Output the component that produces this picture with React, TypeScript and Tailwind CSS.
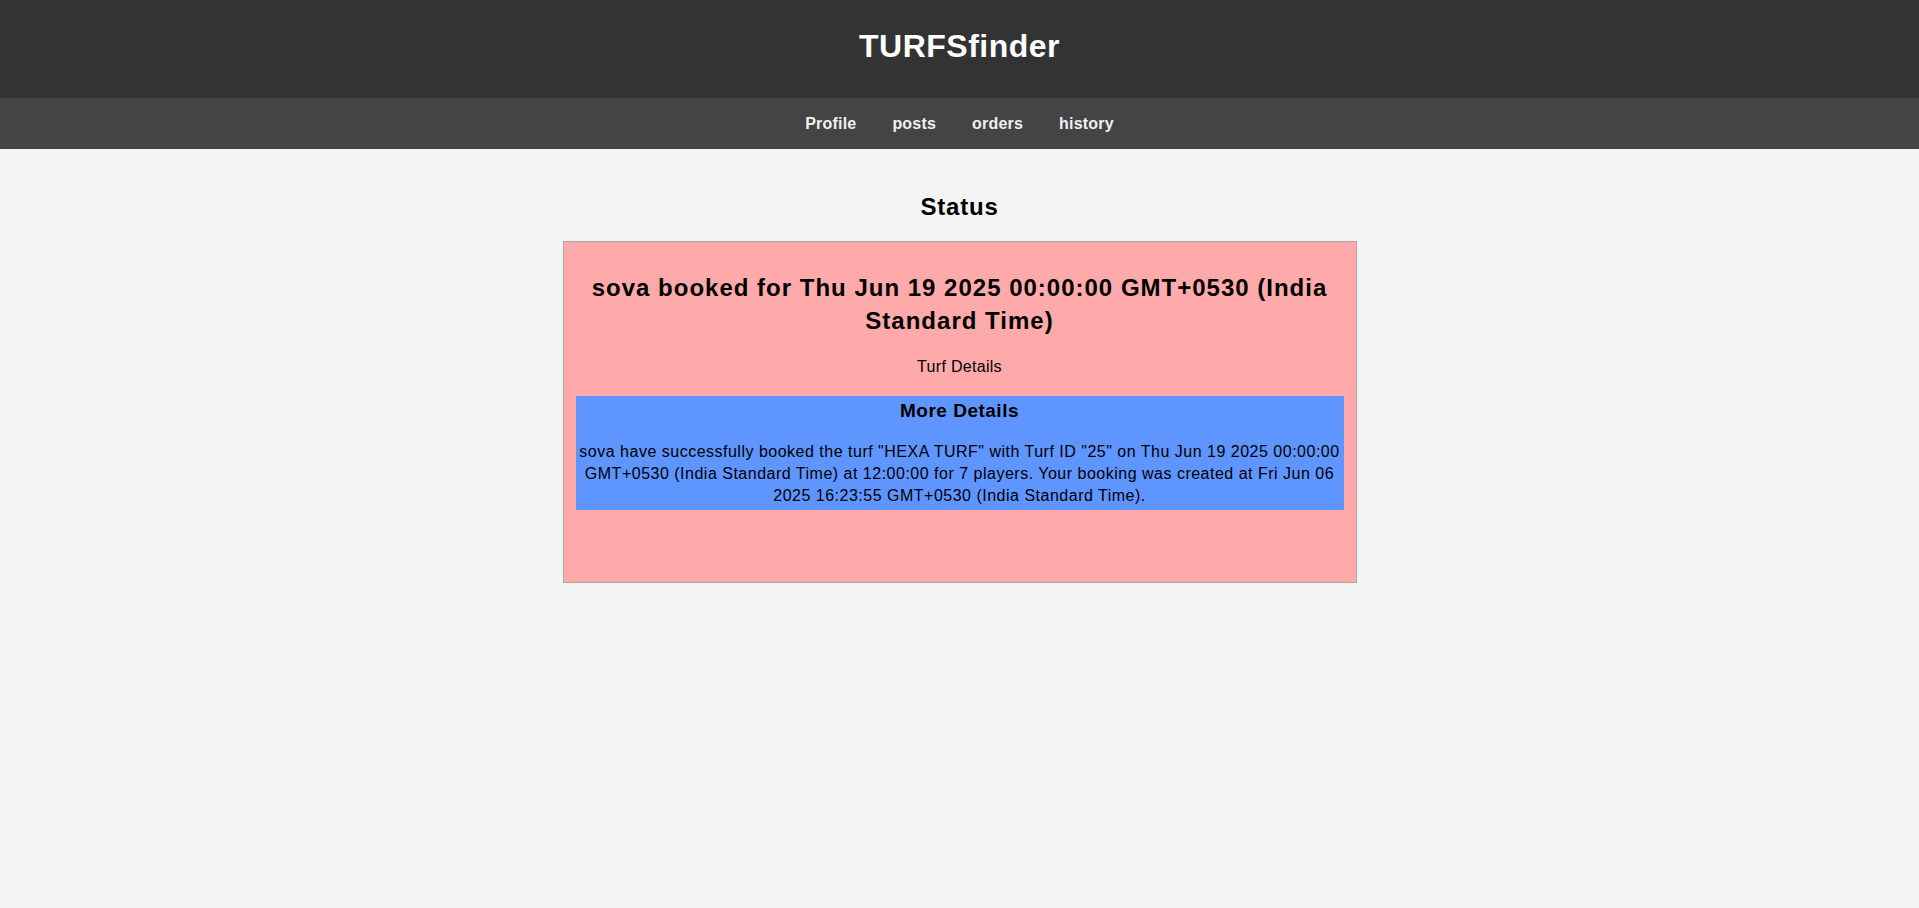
export default function App() {
  const font = { fontFamily: '"Comic Sans MS", "Liberation Sans", Arial, sans-serif' };
  return (
    <div className="min-h-[908px] bg-[#f4f4f4] text-black" style={font}>
      <header className="h-[98px] bg-[#333333] flex items-center justify-center">
        <h1 className="text-white text-[32px] font-bold leading-none tracking-[0.5px] -mt-[6px]">TURFSfinder</h1>
      </header>
      <nav className="h-[51px] bg-[#444444] flex items-center justify-center">
        {['Profile', 'posts', 'orders', 'history'].map((t) => (
          <a key={t} href="#" className="px-[18px] text-[#f0f0f0] text-[16px] font-bold leading-[22px] tracking-[0.2px]">
            {t}
          </a>
        ))}
      </nav>
      <main className="flex flex-col items-center">
        <h2 className="mt-[41px] text-[24px] font-bold leading-[33px] tracking-[0.8px]">Status</h2>
        <div className="mt-[18px] w-[794px] h-[342px] border border-[#a8a8a8] bg-[#ffaaaa] px-[12px] pt-[29px] text-center">
          <h3 className="text-[24px] font-bold leading-[33px] tracking-[1px]">
            sova booked for Thu Jun 19 2025 00:00:00 GMT+0530 (India Standard Time)
          </h3>
          <p className="mt-[19px] text-[16px] leading-[22px] tracking-[0.3px]">Turf Details</p>
          <div className="mt-[18px] bg-[#5e95ff] pt-[2px] pb-[3px]">
            <h4 className="text-[19px] font-bold leading-[26px] tracking-[0.5px]">More Details</h4>
            <p className="mt-[17px] text-[16px] leading-[22px] tracking-[0.5px]">
              sova have successfully booked the turf "HEXA TURF" with Turf ID "25" on Thu Jun 19 2025 00:00:00
              <br />
              GMT+0530 (India Standard Time) at 12:00:00 for 7 players. Your booking was created at Fri Jun 06
              <br />
              2025 16:23:55 GMT+0530 (India Standard Time).
            </p>
          </div>
        </div>
      </main>
    </div>
  );
}
